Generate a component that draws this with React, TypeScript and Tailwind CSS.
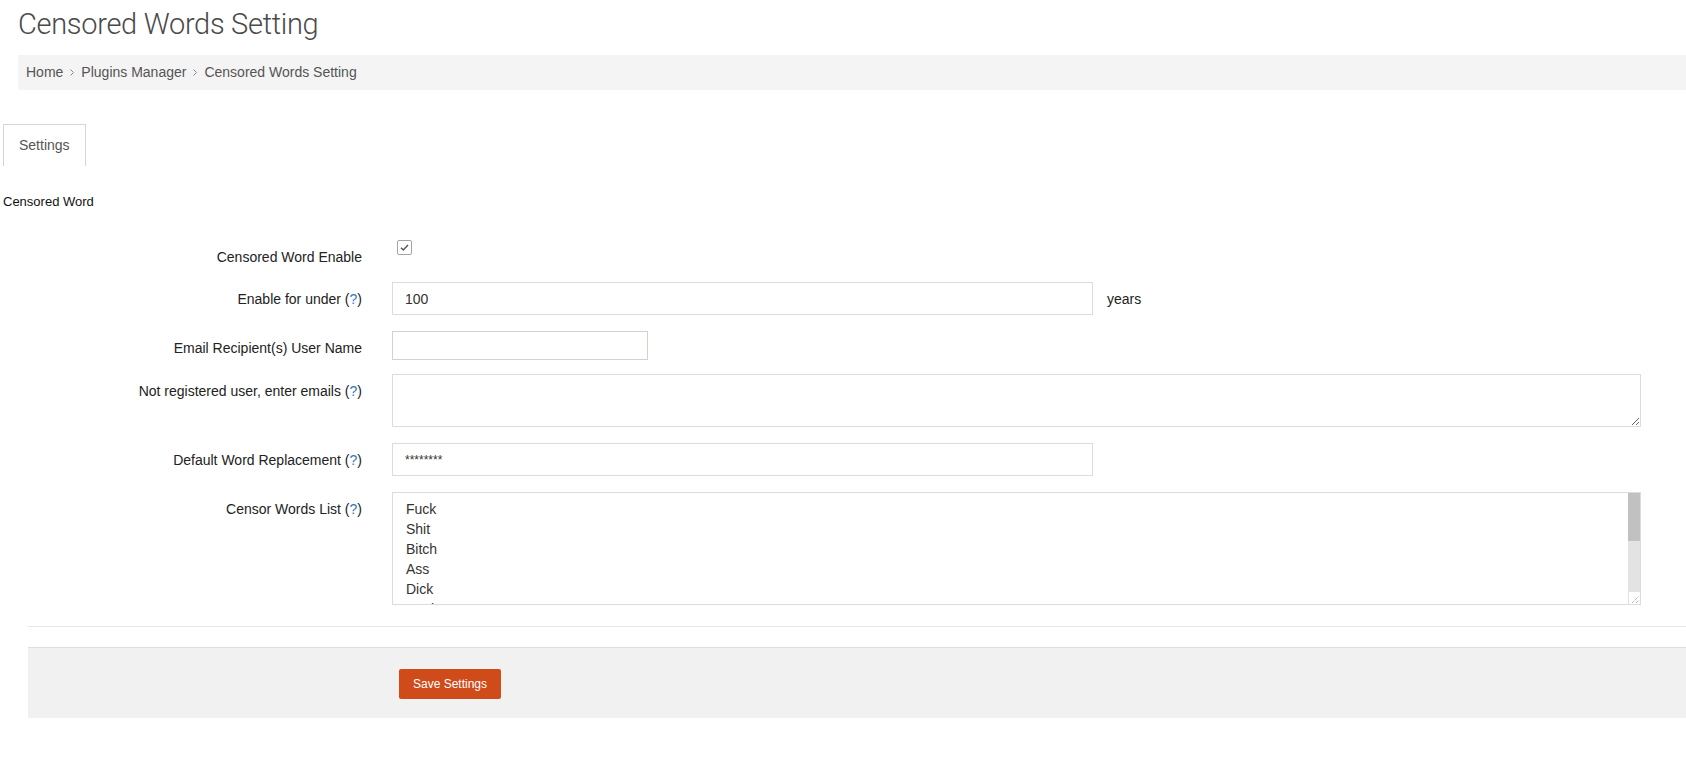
const Help = () => (
  <>
    (<span className="text-[#2f78c4]">?</span>)
  </>
);

const Chevron = () => (
  <svg width="6" height="9" viewBox="0 0 6 9" className="mx-[6px]">
    <path d="M1.5 1.5 L4.5 4.5 L1.5 7.5" fill="none" stroke="#8a8a8a" strokeWidth="1" />
  </svg>
);

const Row = ({ label, children, className = "" }: { label: React.ReactNode; children: React.ReactNode; className?: string }) => (
  <div className={`flex items-start ${className}`}>
    <div className="w-[362px] shrink-0 text-right pt-[7px] leading-[20px] text-[14px] text-[#222]">{label}</div>
    <div className="ml-[30px] flex items-start">{children}</div>
  </div>
);

const words = ["Fuck", "Shit", "Bitch", "Ass", "Dick", "Cock"];

export default function App() {
  return (
    <div className="w-[1686px] min-h-[759px] bg-white font-['Liberation_Sans',Arial,sans-serif] text-[#333]">
      <div className="pl-[18px]">
        <h1 className="pt-[8px] leading-[33px] text-[29px] font-light text-[#4a4a4a] font-['Roboto','Liberation_Sans',sans-serif] tracking-[-0.3px]">
          Censored Words Setting
        </h1>
        <div className="mt-[14px] h-[35px] bg-[#f4f4f4] flex items-center pl-[8px] text-[14px] text-[#555]">
          <span>Home</span>
          <Chevron />
          <span>Plugins Manager</span>
          <Chevron />
          <span>Censored Words Setting</span>
        </div>
      </div>

      <div className="pl-[3px] mt-[34px] flex">
        <div className="h-[42px] px-[15px] border border-b-0 border-[#d6d6d6] flex items-center text-[14px] text-[#555]">
          Settings
        </div>
      </div>

      <div className="pl-[3px] mt-[27px] text-[13px] leading-[18px] text-[#111]">Censored Word</div>

      <div className="mt-[29px] flex flex-col">
        <Row label="Censored Word Enable" className="h-[28px]">
          <div className="ml-[5px] w-[15px] h-[15px] border border-[#a3a3a3] rounded-[2px] bg-white flex items-center justify-center">
            <svg width="11" height="11" viewBox="0 0 11 11">
              <path d="M2 5.8 L4.3 8 L9 3" fill="none" stroke="#5a5a5a" strokeWidth="1.5" />
            </svg>
          </div>
        </Row>

        <Row label={<>Enable for under <Help /></>} className="mt-[14px]">
          <input
            readOnly
            defaultValue="100"
            className="w-[701px] h-[33px] border border-[#dcdcdc] px-[12px] text-[14px] text-[#333] outline-none"
          />
          <span className="ml-[14px] pt-[7px] leading-[20px] text-[14px] text-[#222]">years</span>
        </Row>

        <Row label="Email Recipient(s) User Name" className="mt-[16px]">
          <input readOnly className="w-[256px] h-[29px] border border-[#d4d4c6] px-[8px] text-[14px] outline-none" />
        </Row>

        <Row label={<>Not registered user, enter emails <Help /></>} className="mt-[14px]">
          <textarea readOnly className="block w-[1249px] h-[53px] border border-[#dcdcdc] outline-none" />
        </Row>

        <Row label={<>Default Word Replacement <Help /></>} className="mt-[16px]">
          <input
            readOnly
            defaultValue="********"
            className="w-[701px] h-[33px] border border-[#dcdcdc] px-[12px] text-[12px] text-[#333] outline-none"
          />
        </Row>

        <Row label={<>Censor Words List <Help /></>} className="mt-[16px]">
          <div className="w-[1249px] h-[113px] border border-[#dcdcdc] flex">
            <div className="flex-1 overflow-hidden pl-[13px] pt-[6px] text-[14px] leading-[20px] text-[#333]">
              {words.map((w) => (
                <div key={w}>{w}</div>
              ))}
            </div>
            <div className="w-[12px] flex flex-col">
              <div className="h-[48px] bg-[#c1c1c1]" />
              <div className="flex-1 bg-[#e3e3e3]" />
              <div className="h-[13px] bg-white border-l border-t border-[#e2e2e2] flex items-end justify-end">
                <svg width="10" height="10" viewBox="0 0 10 10">
                  <path d="M2 9 L9 2 M6 9 L9 6" stroke="#777" strokeWidth="0.8" strokeDasharray="1 1" />
                </svg>
              </div>
            </div>
          </div>
        </Row>
      </div>

      <div className="ml-[28px] mt-[21px] h-px bg-[#e6e6e6]" />

      <div className="ml-[28px] mt-[20px] border-t border-[#dedede] bg-[#f1f1f1] pl-[371px] pt-[21px] pb-[19px]">
        <button className="h-[30px] px-[14px] bg-[#cf4b1a] rounded-[2px] text-white text-[12px]">
          Save Settings
        </button>
      </div>
    </div>
  );
}
